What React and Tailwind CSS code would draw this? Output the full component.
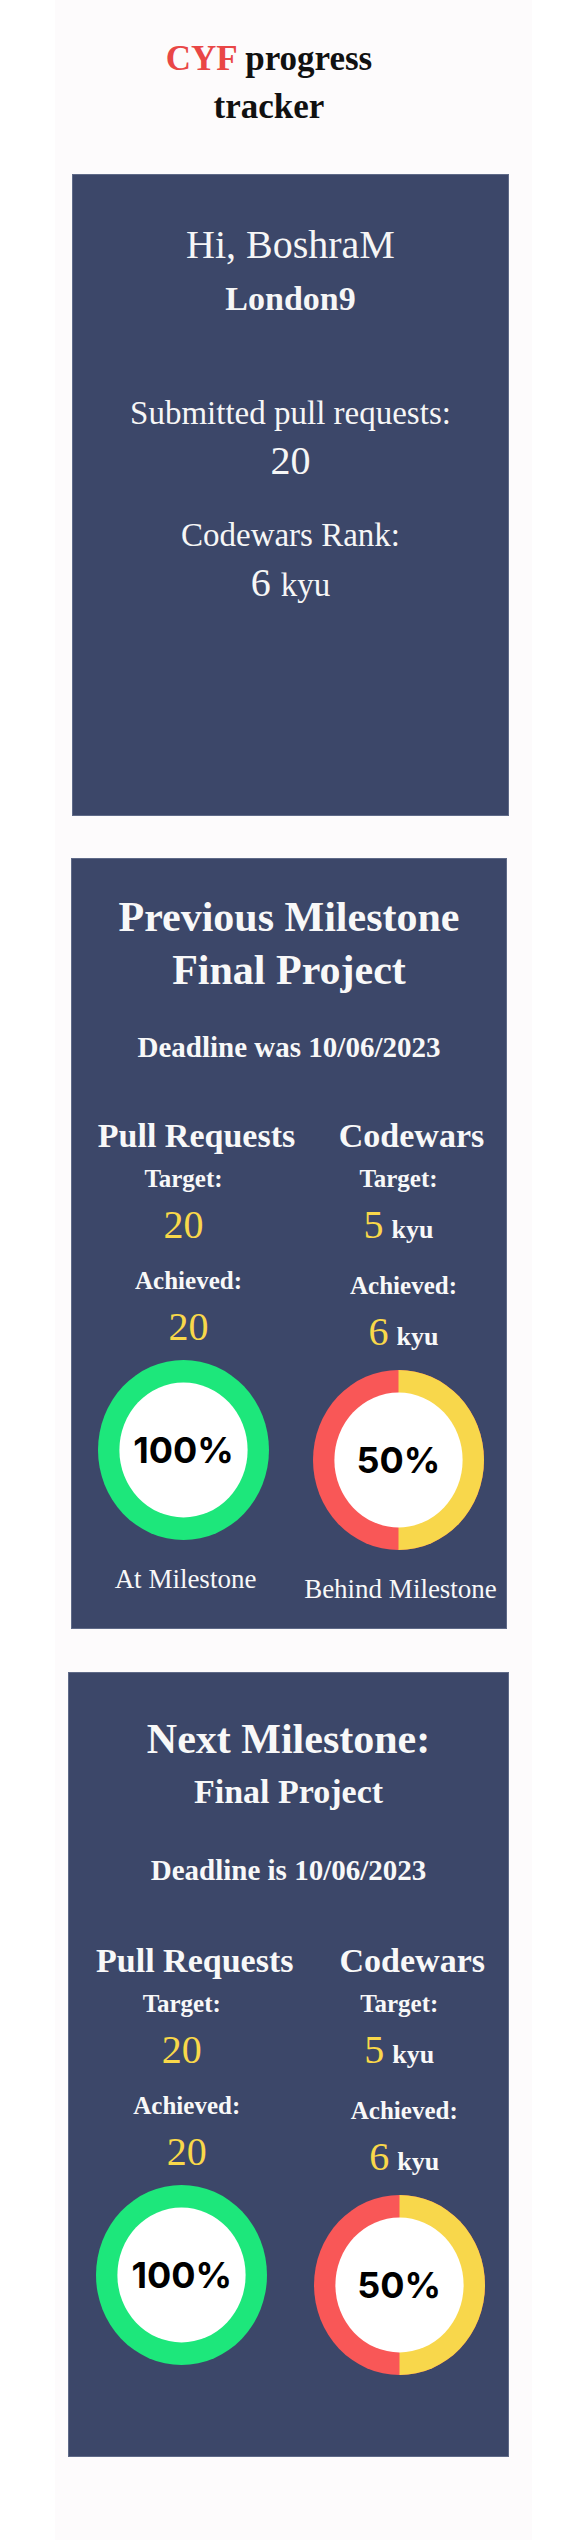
import React from 'react';

const user = { name: 'BoshraM', cohort: 'London9', pullRequests: 20, rank: 6 };

const milestones = [
  {
    id: 'prev',
    heading: 'Previous Milestone Final Project',
    deadline: 'Deadline was 10/06/2023',
    pr: { target: 20, achieved: 20, percent: 100, label: 'At Milestone' },
    cw: { target: 5, achieved: 6, percent: 50, label: 'Behind Milestone' },
  },
  {
    id: 'next',
    heading: 'Next Milestone:',
    sub: 'Final Project',
    deadline: 'Deadline is 10/06/2023',
    pr: { target: 20, achieved: 20, percent: 100 },
    cw: { target: 5, achieved: 6, percent: 50 },
  },
];

const Ring = ({ percent }) => {
  const full = percent >= 100;
  return (
    <div className="relative mx-auto flex h-[180px] w-[171px] items-center justify-center">
      <svg className="absolute inset-0 h-full w-full" viewBox="0 0 100 100" preserveAspectRatio="none">
        {full ? (
          <ellipse cx="50" cy="50" rx="50" ry="50" fill="#1de77b" />
        ) : (
          <>
            <ellipse cx="50" cy="50" rx="50" ry="50" fill="#f95757" />
            <path d="M50 0 A50 50 0 0 1 50 100 Z" fill="#f8d74b" />
          </>
        )}
        <ellipse cx="50" cy="50" rx="37.5" ry="37.5" fill="#ffffff" />
      </svg>
      <span className="relative font-['Inter',sans-serif] text-[36px] font-bold leading-none text-black">
        {percent}%
      </span>
    </div>
  );
};

const StatColumn = ({ title, stat, kyu }) => (
  <div className="flex flex-col items-center">
    <h3 className="whitespace-nowrap pl-[26px] text-[34px] font-bold leading-[40px]">{title}</h3>
    <p className="mt-[7px] text-[25px] font-bold leading-[32px]">Target:</p>
    <p className="mt-[8px] whitespace-nowrap text-[40px] leading-[44px] text-[#f9d84a]">
      {stat.target}
      {kyu && <span className="ml-[8px] text-[26px] font-bold text-[#f8f8f8]">kyu</span>}
    </p>
    <p className="mt-[18px] pl-[10px] text-[25px] font-bold leading-[32px]">Achieved:</p>
    <p className="mt-[8px] whitespace-nowrap pl-[10px] text-[40px] leading-[44px] text-[#f9d84a]">
      {stat.achieved}
      {kyu && <span className="ml-[8px] text-[26px] font-bold text-[#f8f8f8]">kyu</span>}
    </p>
    <div className="mt-[11px] w-full">
      <Ring percent={stat.percent} />
    </div>
    {stat.label && (
      <p className="mt-[23px] whitespace-nowrap pl-[4px] text-[27px] leading-[32px]">{stat.label}</p>
    )}
  </div>
);

const App = () => {
  const [prev, next] = milestones;

  return (
    <div className="min-h-[2540px] bg-white">
      <div className="mx-[55px] min-h-[2540px] bg-[#fdfbfc] pb-[40px]">
        <h1 className="ml-[89px] w-[250px] pt-[35px] text-center font-['Liberation_Serif',serif] text-[35px] font-bold leading-[48px] text-[#111111]">
          <span className="block">
            <span className="text-[#e94646]">CYF</span> progress
          </span>
          <span className="block">tracker</span>
        </h1>

        <section className="ml-[17px] mt-[43px] h-[642px] w-[437px] border border-[#5f6a88] bg-[#3c4769] pt-[46px] text-center font-['Liberation_Serif',serif] text-[#f6f6f6]">
          <h2 className="text-[40px] leading-[48px]">Hi, {user.name}</h2>
          <p className="mt-[10px] text-[34px] font-bold leading-[40px]">{user.cohort}</p>
          <p className="mt-[74px] text-[33px] leading-[40px]">Submitted pull requests:</p>
          <p className="mt-[4px] text-[40px] leading-[48px]">{user.pullRequests}</p>
          <p className="mt-[30px] text-[33px] leading-[40px]">Codewars Rank:</p>
          <p className="mt-[4px] text-[40px] leading-[48px]">
            {user.rank} <span className="text-[33px]">kyu</span>
          </p>
        </section>

        <section className="ml-[16px] mt-[42px] h-[771px] w-[436px] border border-[#5f6a88] bg-[#3c4769] px-4 pt-[32px] text-center font-['Liberation_Serif',serif] text-[#f8f8f8]">
          <h2 className="text-[42px] font-bold leading-[53px]">{prev.heading}</h2>
          <p className="mt-[32px] text-[29px] font-bold leading-[36px]">{prev.deadline}</p>
          <div className="-mx-4 mt-[51px] grid grid-cols-2 pl-1">
            <StatColumn title="Pull Requests" stat={prev.pr} />
            <StatColumn title="Codewars" stat={prev.cw} kyu />
          </div>
        </section>

        <section className="ml-[13px] mt-[43px] h-[785px] w-[441px] border border-[#5f6a88] bg-[#3c4769] px-4 pt-[40px] text-center font-['Liberation_Serif',serif] text-[#f8f8f8]">
          <h2 className="text-[42px] font-bold leading-[53px]">{next.heading}</h2>
          <p className="mt-[6px] text-[34px] font-bold leading-[40px]">{next.sub}</p>
          <p className="mt-[40px] text-[29px] font-bold leading-[36px]">{next.deadline}</p>
          <div className="-mx-4 mt-[53px] grid grid-cols-2 pl-1">
            <StatColumn title="Pull Requests" stat={next.pr} />
            <StatColumn title="Codewars" stat={next.cw} kyu />
          </div>
        </section>
      </div>
    </div>
  );
};

export default App;
